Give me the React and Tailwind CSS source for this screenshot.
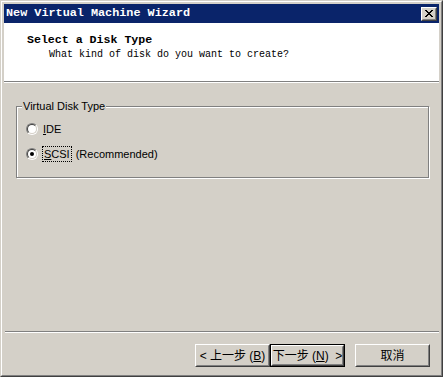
import React from "react";

const sans = { fontFamily: '"Liberation Sans", Arial, sans-serif' };

const Radio = ({ checked }) => (
  <div className="w-[12px] h-[12px] rounded-full border border-t-[#808080] border-l-[#808080] border-r-white border-b-white">
    <div className="w-full h-full rounded-full border border-t-[#404040] border-l-[#404040] border-r-[#d4d0c8] border-b-[#d4d0c8] bg-white flex items-center justify-center">
      {checked && <div className="w-[4px] h-[4px] rounded-full bg-black" />}
    </div>
  </div>
);

const WinButton = ({ children, isDefault }) => {
  const body = (
    <div className="w-full h-full border border-t-white border-l-white border-r-[#404040] border-b-[#404040]">
      <div className="w-full h-full border border-t-[#d4d0c8] border-l-[#d4d0c8] border-r-[#808080] border-b-[#808080] flex items-center justify-center text-[12px] text-black whitespace-pre font-['Liberation_Sans','Noto_Sans_CJK_SC',sans-serif]">
        {children}
      </div>
    </div>
  );
  return (
    <div className={"w-[75px] h-[23px] " + (isDefault ? "border border-black" : "")}>
      {body}
    </div>
  );
};

export default function App() {
  return (
    <div className="w-[445px] h-[379px] bg-white">
      <div className="w-[443px] h-[377px] border border-t-[#d4d0c8] border-l-[#d4d0c8] border-r-[#404040] border-b-[#404040]">
        <div className="w-full h-full border border-t-white border-l-white border-r-[#808080] border-b-[#808080] bg-[#d4d0c8] p-[2px] flex flex-col">
          {/* title bar */}
          <div className="h-[19px] bg-[#0a246a] flex items-center justify-between pl-[2px] pr-[2px]">
            <span className="text-white font-bold text-[11.8px] leading-none font-['Liberation_Mono',monospace]">
              New Virtual Machine Wizard
            </span>
            <div className="w-[16px] h-[14px] border border-t-white border-l-white border-r-[#404040] border-b-[#404040]">
              <div className="w-full h-full border border-t-[#d4d0c8] border-l-[#d4d0c8] border-r-[#808080] border-b-[#808080] bg-[#d4d0c8] flex items-center justify-center">
                <svg width="8" height="7" viewBox="0 0 8 7" shapeRendering="crispEdges">
                  <path d="M0 0h2v1h-2zM6 0h2v1h-2zM1 1h2v1h-2zM5 1h2v1h-2zM2 2h4v1h-4zM3 3h2v1h-2zM2 4h4v1h-4zM1 5h2v1h-2zM5 5h2v1h-2zM0 6h2v1h-2zM6 6h2v1h-2z" fill="#000" />
                </svg>
              </div>
            </div>
          </div>

          {/* header */}
          <div className="h-[58px] bg-white pt-[10px] font-['Liberation_Mono',monospace] text-black">
            <div className="pl-[23px] text-[11.6px] font-bold leading-[14px]">Select a Disk Type</div>
            <div className="pl-[45px] mt-[1px] text-[10px] leading-[14px]">
              What kind of disk do you want to create?
            </div>
          </div>
          <div className="h-[1px] bg-[#808080]" />
          <div className="h-[1px] bg-white" />

          {/* body */}
          <div className="flex-1 pt-[23px] pl-[12px] pr-[10px]" style={sans}>
            <div className="relative border border-[#808080] shadow-[inset_1px_1px_0_#fff,1px_1px_0_#fff] pt-[14px] pb-[15px] pl-[9px] flex flex-col gap-[9px] text-[11px] text-black">
              <span className="absolute left-[5px] top-[-8px] bg-[#d4d0c8] px-[1px] leading-[14px]">
                Virtual Disk Type
              </span>
              <div className="h-[16px] flex items-center gap-[5px]">
                <Radio />
                <span className="leading-[14px]">
                  <span className="underline">I</span>DE
                </span>
              </div>
              <div className="h-[16px] flex items-center gap-[4px]">
                <Radio checked />
                <span className="leading-[14px] border border-dotted border-black px-[1px]">
                  <span className="underline">S</span>CSI
                </span>
                <span className="leading-[14px]">(Recommended)</span>
              </div>
            </div>
          </div>

          <div className="h-[1px] bg-[#808080] ml-[1px]" />
          <div className="h-[1px] bg-white ml-[1px]" />

          {/* buttons */}
          <div className="h-[40px] pt-[11px] pr-[9px] flex justify-end items-start">
            <WinButton>
              {"< 上一步 ("}<span className="underline">B</span>{")"}
            </WinButton>
            <WinButton isDefault>
              {"下一步 ("}<span className="underline">N</span>{")  >"}
            </WinButton>
            <div className="w-[10px]" />
            <WinButton>取消</WinButton>
          </div>
        </div>
      </div>
    </div>
  );
}
